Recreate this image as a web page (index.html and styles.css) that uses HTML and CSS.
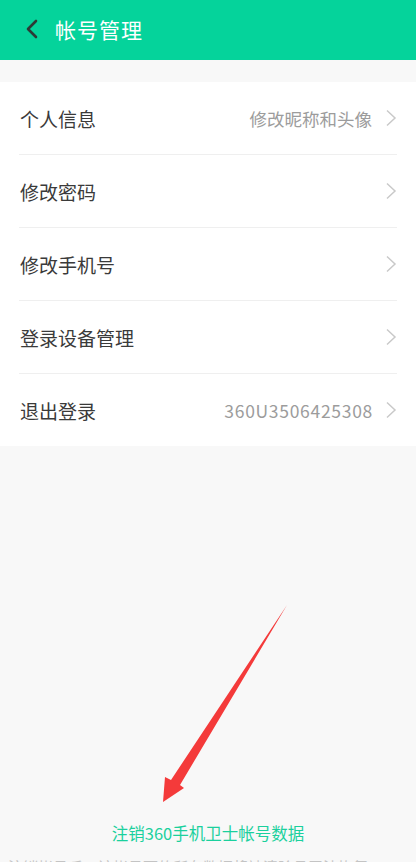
FILE: index.html
```html
<!DOCTYPE html>
<html lang="zh-CN">
  <head>
    <meta charset="UTF-8" />
    <meta name="viewport" content="width=device-width, initial-scale=1.0" />
    <title>帐号管理</title>
    <link rel="stylesheet" href="styles.css">
  </head>
  <body>
    <div class="page">
      <header class="topbar">
        <svg class="back" width="14" height="20" viewBox="0 0 14 20">
          <path d="M11 2 L3 10 L11 18" fill="none" stroke="#2d3a36" stroke-width="2.6" stroke-linecap="round" stroke-linejoin="round"/>
        </svg>
        <h1>帐号管理</h1>
      </header>

      <section class="list">
        <div class="row">
          <span class="label">个人信息</span>
          <span class="value">修改昵称和头像</span>
          <svg class="chevron" width="12" height="18" viewBox="0 0 12 18"><path d="M2 1.5 L10 9 L2 16.5" fill="none" stroke="#c9c9c9" stroke-width="1.5"/></svg>
        </div>
        <div class="row">
          <span class="label">修改密码</span>
          <svg class="chevron" width="12" height="18" viewBox="0 0 12 18"><path d="M2 1.5 L10 9 L2 16.5" fill="none" stroke="#c9c9c9" stroke-width="1.5"/></svg>
        </div>
        <div class="row">
          <span class="label">修改手机号</span>
          <svg class="chevron" width="12" height="18" viewBox="0 0 12 18"><path d="M2 1.5 L10 9 L2 16.5" fill="none" stroke="#c9c9c9" stroke-width="1.5"/></svg>
        </div>
        <div class="row">
          <span class="label">登录设备管理</span>
          <svg class="chevron" width="12" height="18" viewBox="0 0 12 18"><path d="M2 1.5 L10 9 L2 16.5" fill="none" stroke="#c9c9c9" stroke-width="1.5"/></svg>
        </div>
        <div class="row">
          <span class="label">退出登录</span>
          <span class="value account">360U3506425308</span>
          <svg class="chevron" width="12" height="18" viewBox="0 0 12 18"><path d="M2 1.5 L10 9 L2 16.5" fill="none" stroke="#c9c9c9" stroke-width="1.5"/></svg>
        </div>
      </section>

      <footer class="footer">
        <a class="cancel">注销360手机卫士帐号数据</a>
        <p class="note">注销帐号后，该帐号下的所有数据将被清除且无法恢复</p>
      </footer>

      <!-- red annotation arrow -->
      <svg class="arrow" width="416" height="862" viewBox="0 0 416 862">
        <polygon points="287,605 180,785 184,788 163,802 165,777 171,780" fill="#f43a3a"/>
      </svg>
    </div>
  </body>
</html>
```

FILE: styles.css
```css
* {
  margin: 0;
  padding: 0;
  box-sizing: border-box;
}
body {
  font-family: "Noto Sans CJK SC", "Noto Sans", sans-serif;
  background-color: #f8f8f8;
  color: #333;
}
.page {
  position: relative;
  height: 862px;
  overflow: hidden;
}
.topbar {
  height: 60px;
  background-color: #05d39b;
  display: flex;
  align-items: center;
  padding-left: 25px;
  padding-bottom: 2px;
}
.topbar .back {
  margin-right: 16px;
}
.topbar h1 {
  font-size: 21px;
  font-weight: 400;
  color: #fff;
  letter-spacing: 1px;
}
.list {
  margin-top: 22px;
  background-color: #fff;
}
.row {
  height: 73px;
  margin: 0 19px;
  display: flex;
  align-items: center;
  border-bottom: 1px solid #efefef;
}
.row:last-child {
  height: 72px;
  border-bottom: none;
}
.label {
  flex: 1;
  font-size: 19px;
  color: #3a3a3a;
  padding-left: 1px;
}
.value {
  font-size: 17.5px;
  color: #9c9c9c;
  margin-right: 13px;
}
.value.account {
  letter-spacing: 0.7px;
  margin-right: 12px;
}
.footer {
  padding-top: 375px;
  text-align: center;
}
.cancel {
  display: block;
  font-size: 16.5px;
  color: #1bd09d;
  line-height: 24px;
}
.note {
  margin-top: 12px;
  font-size: 15px;
  line-height: 20px;
  color: #c4c4c4;
  text-align: left;
  padding-left: 8px;
  white-space: nowrap;
}
.arrow {
  position: absolute;
  left: 0;
  top: 0;
  pointer-events: none;
}
```
